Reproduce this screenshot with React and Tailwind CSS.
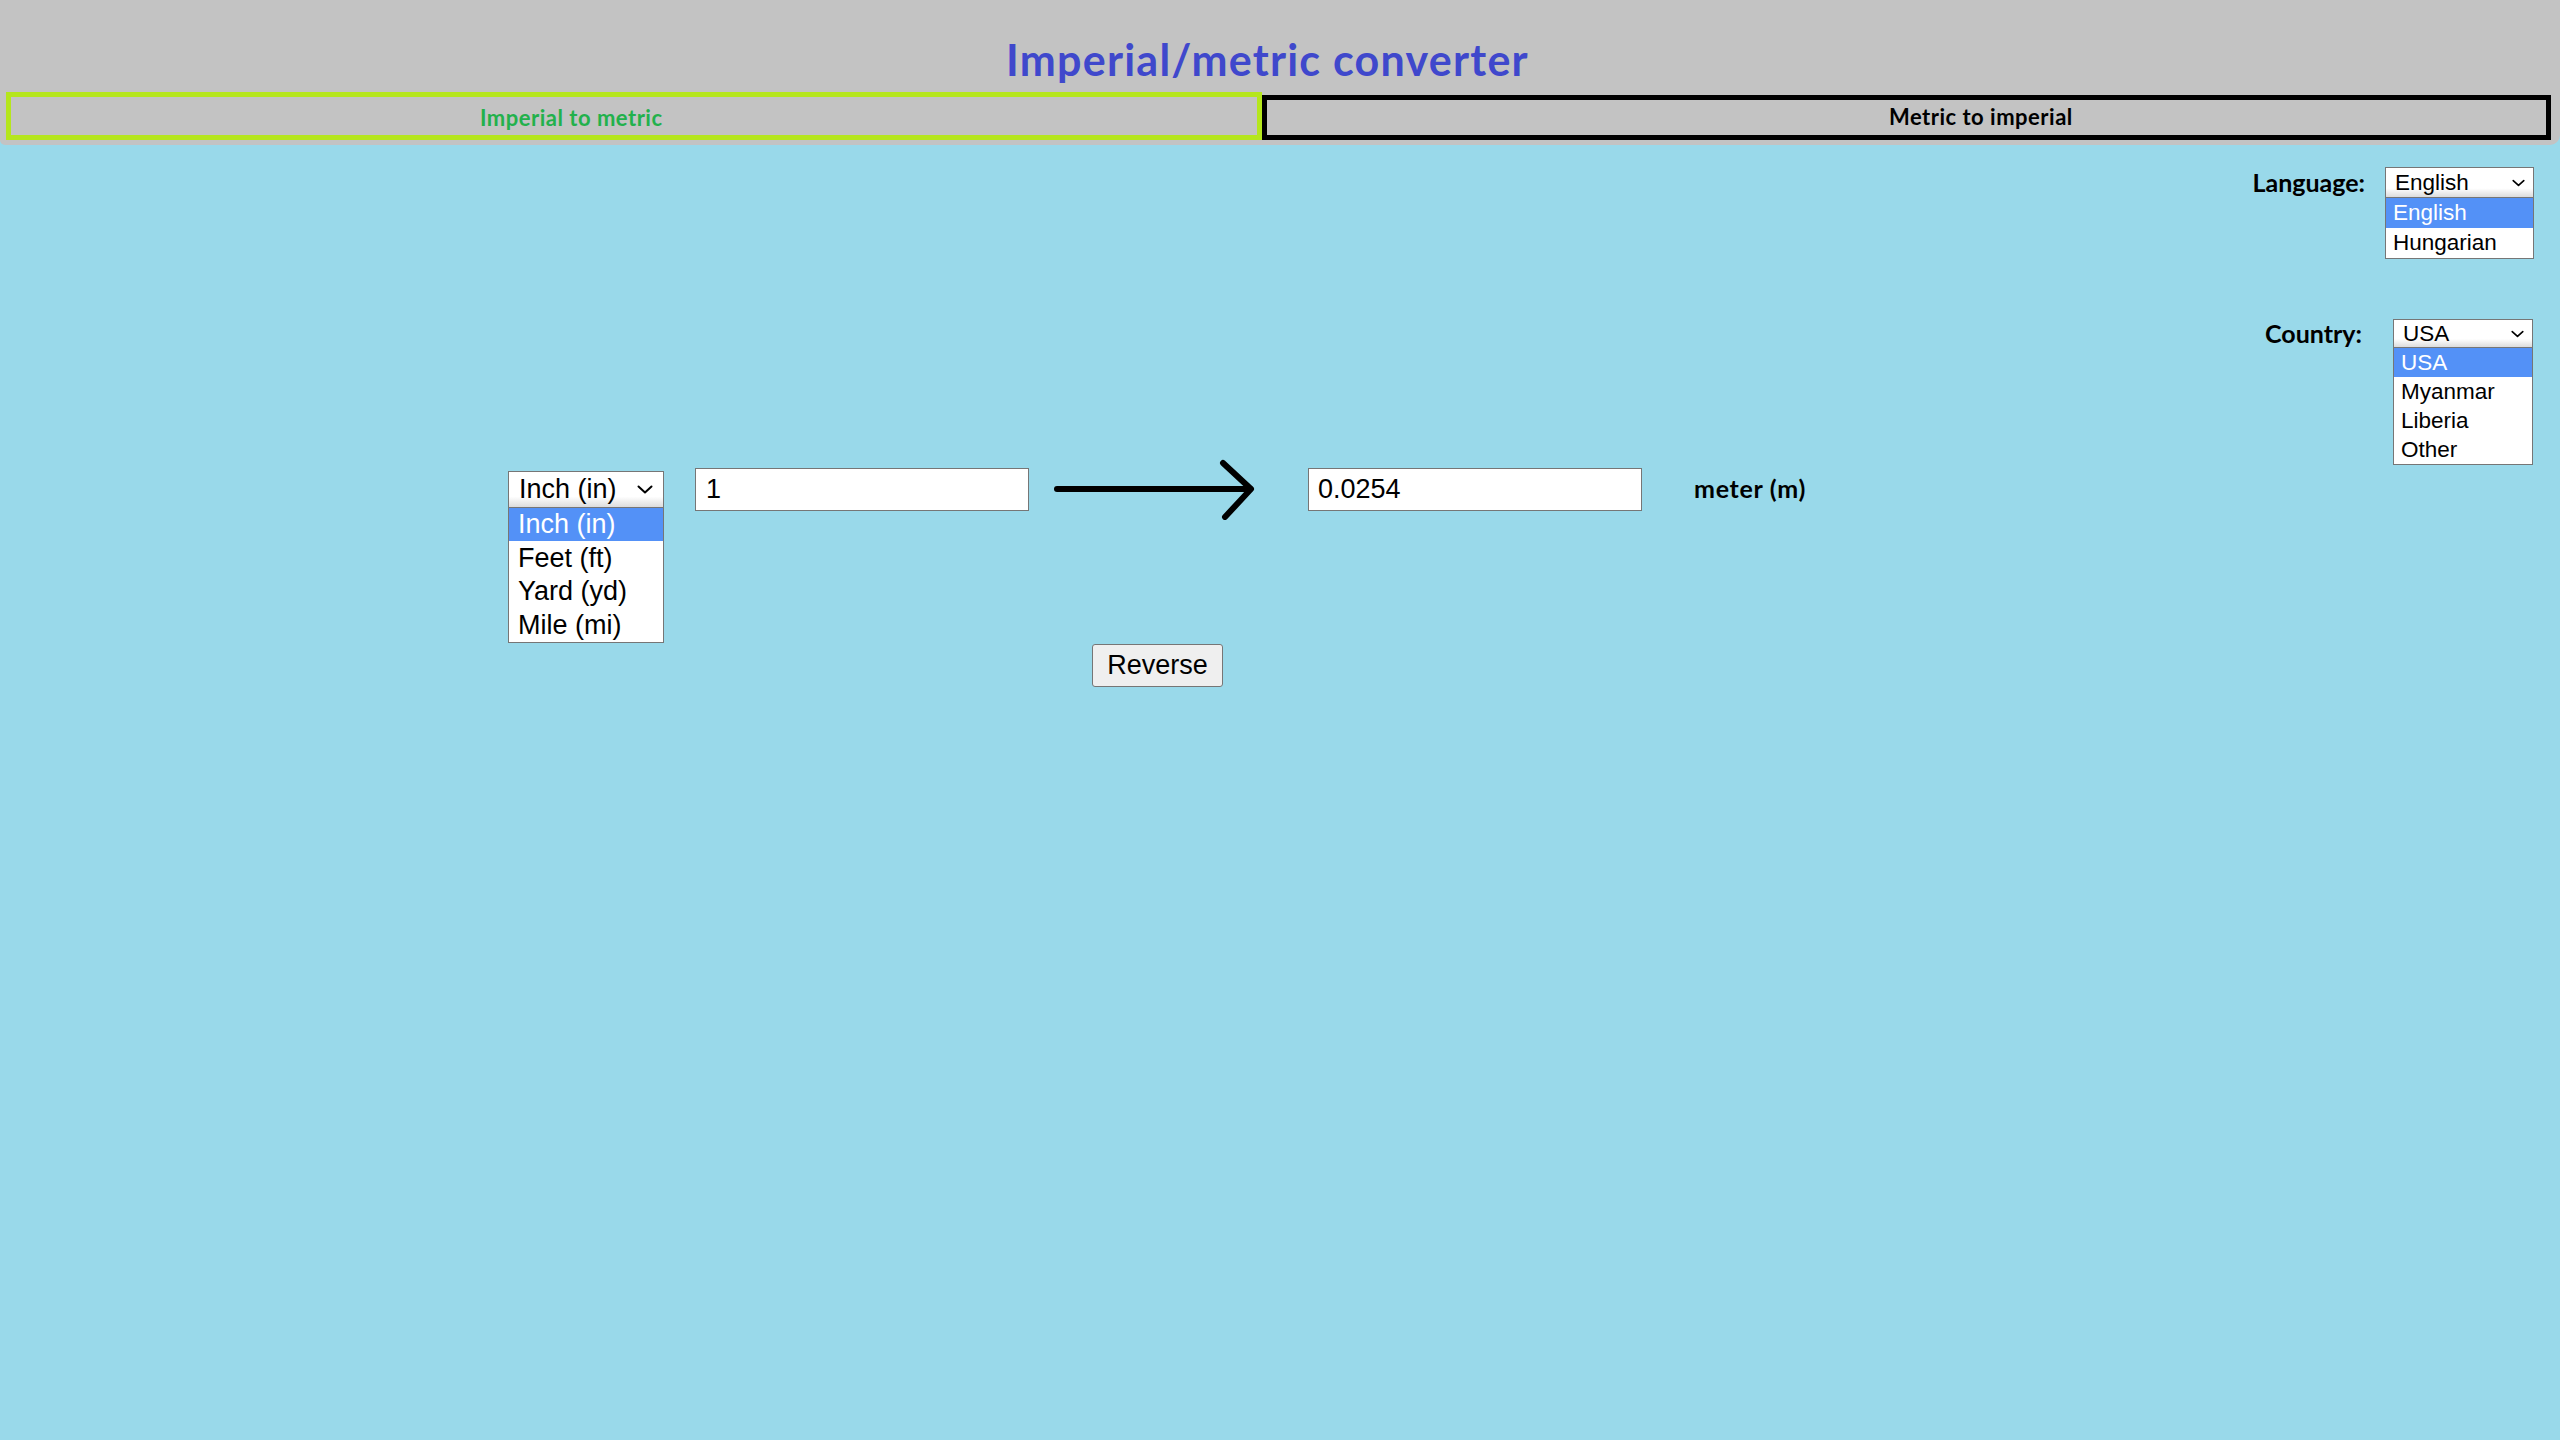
import { useState } from 'react';

const Chevron = ({ className }) => (
    <svg className={className} viewBox="0 0 16 9" fill="none" stroke="black" strokeWidth="2" strokeLinecap="round" strokeLinejoin="round">
        <path d="M1.5 1.5l6.5 6 6.5-6" />
    </svg>
);

// select drawn with its option list open underneath
const OpenSelect = ({ options, value, boxClass, rowClass, chevronClass }) => (
    <div className="relative">
        <div className={`flex items-center justify-between border border-[#767676] bg-linear-to-b from-white from-70% to-[#dcdcdc] ${boxClass}`}>
            <span>{value}</span>
            <Chevron className={chevronClass} />
        </div>
        <ul className="absolute left-0 top-full z-10 w-full border border-t-0 border-[#767676] bg-white">
            {options.map(o => (
                <li key={o} className={`flex items-center ${rowClass} ${o === value ? 'bg-[#5391f7] text-white' : 'text-black'}`}>{o}</li>
            ))}
        </ul>
    </div>
);

const App = () => {
    const [mode] = useState('imperial');
    const [amount] = useState('1');

    return (
        <div className="min-h-screen bg-[#99d9ea] font-['Lato',sans-serif] text-black">
            <div className="flex h-[145px] flex-col rounded-bl-[5px] rounded-br-[10px] bg-[#c3c3c3]">
                <h1 className="mt-[38px] h-[42px] pr-[25px] text-center text-[43px] font-bold leading-none tracking-[1.25px] text-[#3f48cc]">
                    Imperial/metric converter
                </h1>
                <div className="mt-[12px] flex items-end pl-[6px]">
                    <div className={`flex h-[48px] w-[1256px] items-center border-[5px] border-[#b5e61d] pl-[469px] pt-[2px] text-[22px] font-bold tracking-[0.5px] ${mode === 'imperial' ? 'text-[#22b14c]' : 'text-black'}`}>
                        Imperial to metric
                    </div>
                    <div className="flex h-[45px] w-[1289px] items-center border-[5px] border-black pb-[2px] pl-[622px] text-[22px] font-bold tracking-[0.5px]">
                        Metric to imperial
                    </div>
                </div>
            </div>

            <div className="mt-[22px] flex h-[31px] items-center justify-end gap-[20px] pr-[26px]">
                <span className="text-[25px] font-bold">Language:</span>
                <div className="w-[149px] font-['Liberation_Sans',Arial,sans-serif] text-[22.5px]">
                    <OpenSelect
                        options={['English', 'Hungarian']}
                        value="English"
                        boxClass="h-[31px] pl-[9px] pr-[8px]"
                        rowClass="h-[30px] pl-[7px]"
                        chevronClass="h-[8px] w-[13px]"
                    />
                </div>
            </div>

            <div className="mt-[121px] flex h-[29px] items-center justify-end gap-[31px] pr-[27px]">
                <span className="text-[25px] font-bold">Country:</span>
                <div className="w-[140px] font-['Liberation_Sans',Arial,sans-serif] text-[22.5px]">
                    <OpenSelect
                        options={['USA', 'Myanmar', 'Liberia', 'Other']}
                        value="USA"
                        boxClass="h-[29px] pl-[9px] pr-[8px]"
                        rowClass="h-[29px] pl-[7px]"
                        chevronClass="h-[8px] w-[13px]"
                    />
                </div>
            </div>

            <div className="mt-[110px] flex items-center pl-[508px] font-['Liberation_Sans',Arial,sans-serif] text-[27px]">
                <div className="w-[156px]">
                    <OpenSelect
                        options={['Inch (in)', 'Feet (ft)', 'Yard (yd)', 'Mile (mi)']}
                        value="Inch (in)"
                        boxClass="h-[37px] pl-[10px] pr-[10px]"
                        rowClass="h-[33.5px] pl-[9px]"
                        chevronClass="h-[9px] w-[16px]"
                    />
                </div>
                <input
                    className="ml-[31px] h-[43px] w-[334px] border border-[#767676] bg-white pl-[10px] outline-none"
                    value={amount}
                    readOnly
                />
                <svg className="ml-[23px] h-[62px] w-[208px]" viewBox="0 0 208 62" fill="none" stroke="black" strokeWidth="6" strokeLinecap="round" strokeLinejoin="round">
                    <path d="M5 31H198" />
                    <path d="M171 5l28 26-26 28" />
                </svg>
                <input
                    className="ml-[48px] h-[43px] w-[334px] border border-[#767676] bg-white pl-[9px] outline-none"
                    value="0.0254"
                    readOnly
                />
                <span className="ml-[52px] font-['Lato',sans-serif] text-[25px] font-bold tracking-[0.7px]">meter (m)</span>
            </div>

            <div className="mt-[124px] pl-[1092px]">
                <button className="h-[43px] w-[131px] rounded-[3px] border border-[#767676] bg-[#efefef] font-['Liberation_Sans',Arial,sans-serif] text-[27px]">
                    Reverse
                </button>
            </div>
        </div>
    );
};

export default App;
